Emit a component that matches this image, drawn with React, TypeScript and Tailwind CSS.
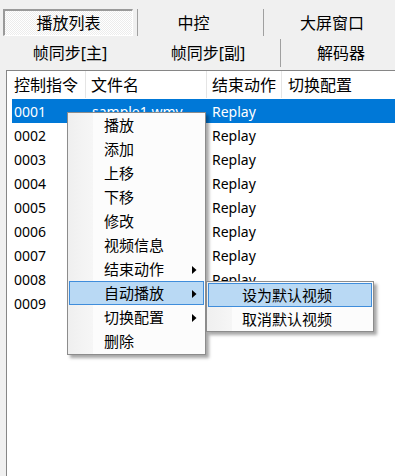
import React from "react";

const FONT = { fontFamily: '"Noto Sans", "Noto Sans CJK SC", sans-serif' };

const rows = ["0001", "0002", "0003", "0004", "0005", "0006", "0007", "0008", "0009"];

function Arrow() {
  return (
    <svg width="5" height="8" viewBox="0 0 5 8" className="absolute left-[122px] top-[8px]">
      <path d="M0 0 L4.5 4 L0 8 Z" fill="#000" />
    </svg>
  );
}

const menuItems: { label: string; sub?: boolean; hot?: boolean }[] = [
  { label: "播放" },
  { label: "添加" },
  { label: "上移" },
  { label: "下移" },
  { label: "修改" },
  { label: "视频信息" },
  { label: "结束动作", sub: true },
  { label: "自动播放", sub: true, hot: true },
  { label: "切换配置", sub: true },
  { label: "删除" },
];

export default function App() {
  return (
    <div
      className="relative w-[395px] h-[476px] bg-[#f0f0f0] overflow-hidden flex flex-col text-black"
      style={FONT}
    >
      {/* Row 1 tabs */}
      <div className="flex h-[27px] mt-[9px] items-stretch text-[16px] leading-none">
        <div className="ml-[3px] w-[130px] border-t-2 border-l-2 border-t-[#9a9a9a] border-l-[#9a9a9a] border-b border-r border-b-white border-r-white bg-[conic-gradient(#ffffff_25%,#ececec_0_50%,#ffffff_0_75%,#ececec_0)] bg-[length:2px_2px] flex items-center justify-center">
          播放列表
        </div>
        <div className="ml-[4px] w-px bg-[#a0a0a0]" />
        <div className="w-[125px] flex items-center justify-center pr-[14px]">中控</div>
        <div className="w-px bg-[#a0a0a0]" />
        <div className="flex-1 flex items-center justify-center pl-[5px]">大屏窗口</div>
      </div>
      {/* Row 2 */}
      <div className="flex h-[28px] mt-[3px] items-stretch text-[16px] leading-none">
        <div className="w-[140px] flex items-center justify-center">帧同步[主]</div>
        <div className="w-[140px] flex items-center justify-center pr-[4px]">帧同步[副]</div>
        <div className="w-px bg-[#a0a0a0]" />
        <div className="flex-1 flex items-center justify-center pl-[6px]">解码器</div>
      </div>
      {/* List */}
      <div className="mt-[3px] ml-[6px] flex-1 bg-white border-l border-t border-[#868686]">
        <div className="flex h-[27px] text-[16px] leading-none">
          <div className="w-[79px] border-r border-[#e5e5e5] flex items-center pl-[7px]">控制指令</div>
          <div className="w-[121px] border-r border-[#e5e5e5] flex items-center pl-[5px]">文件名</div>
          <div className="w-[75px] border-r border-[#e5e5e5] flex items-center pl-[5px]">结束动作</div>
          <div className="flex-1 flex items-center pl-[6px]">切换配置</div>
        </div>
        <div className="mt-px">
          {rows.map((r, i) => (
            <div
              key={r}
              className={`ml-[5px] flex h-[24px] items-center text-[14px] leading-none pt-px ${
                i === 0 ? "bg-[#0078d7] text-white" : "text-black"
              }`}
            >
              <div className="w-[74px] pl-[2px]">{r}</div>
              <div className="w-[120px] pl-[6px]">{i === 0 ? "sample1.wmv" : ""}</div>
              <div className="w-[76px] pl-[6px]">{i < 8 ? "Replay" : ""}</div>
              <div className="flex-1" />
            </div>
          ))}
        </div>
      </div>

      {/* Context menu */}
      <div className="absolute left-[67px] top-[112px] w-[139px] h-[243px] bg-[#fcfcfc] border border-[#8c8c8c] shadow-[3px_3px_3px_rgba(0,0,0,0.35)] px-px">
        <div className="absolute left-0 top-0 bottom-0 w-[25px] bg-gradient-to-r from-[#efefef] to-[#f6f6f6]" />
        <div className="relative flex flex-col">
          {menuItems.map((m) => (
            <div
              key={m.label}
              className={`relative h-[24px] flex items-center pl-[34px] text-[15px] leading-none border ${
                m.hot ? "bg-[#b9d9f4] border-[#3f8ddb]" : "border-transparent"
              }`}
            >
              {m.label}
              {m.sub && <Arrow />}
            </div>
          ))}
        </div>
      </div>

      {/* Submenu */}
      <div className="absolute left-[206px] top-[281px] w-[168px] h-[51px] bg-[#fcfcfc] border border-[#8c8c8c] shadow-[3px_3px_3px_rgba(0,0,0,0.35)] p-px">
        <div className="absolute left-0 top-0 bottom-0 w-[25px] bg-gradient-to-r from-[#efefef] to-[#f6f6f6]" />
        <div className="relative flex flex-col">
          <div className="h-[24px] flex items-center pl-[33px] text-[15px] leading-none border bg-[#b9d9f4] border-[#3f8ddb]">
            设为默认视频
          </div>
          <div className="h-[24px] flex items-center pl-[33px] text-[15px] leading-none border border-transparent">
            取消默认视频
          </div>
        </div>
      </div>
    </div>
  );
}
